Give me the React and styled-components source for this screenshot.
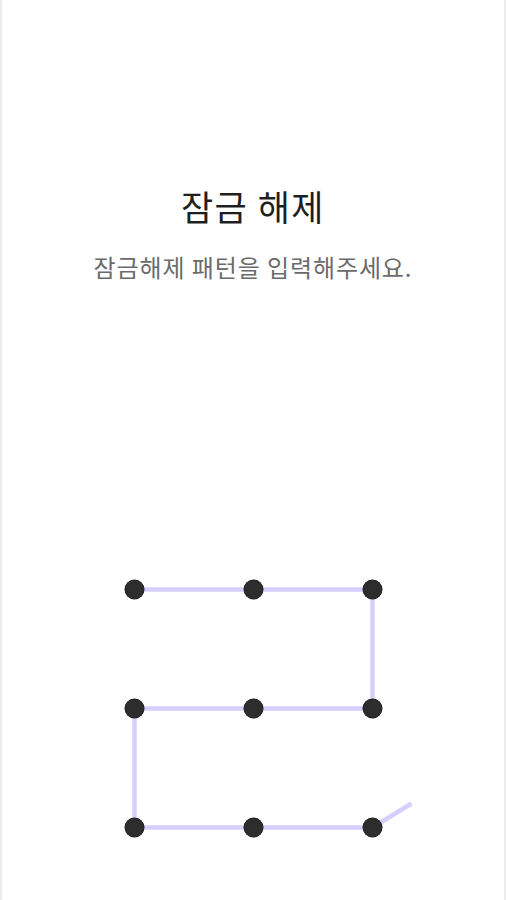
import styled, { createGlobalStyle } from "styled-components";

const GlobalStyle = createGlobalStyle`
  html, body {
    margin: 0;
    padding: 0;
    background: #ffffff;
  }
  body {
    font-family: "Noto Sans CJK KR", "Noto Sans", sans-serif;
  }
`;

const Screen = styled.div`
  box-sizing: border-box;
  width: 506px;
  height: 900px;
  display: flex;
  flex-direction: column;
  align-items: center;
  border-left: 2px solid #ececec;
  border-right: 2px solid #ececec;
  background: #fff;
  overflow: hidden;
`;

const Header = styled.div`
  display: flex;
  flex-direction: column;
  align-items: center;
  padding-top: 182px;
  gap: 22px;
`;

const Title = styled.h1`
  margin: 0;
  font-size: 35px;
  font-weight: 400;
  line-height: 48px;
  color: #1f1f1f;
  letter-spacing: 1.5px;
`;

const Subtitle = styled.p`
  margin: 0;
  font-size: 24px;
  font-weight: 400;
  line-height: 30px;
  color: #6b6b6b;
  letter-spacing: 0.9px;
`;

const PatternPad = styled.div`
  position: relative;
  margin-top: 248px;
  width: 357px;
  height: 357px;
  display: grid;
  grid-template-columns: repeat(3, 1fr);
  grid-template-rows: repeat(3, 1fr);
`;

const Trail = styled.svg`
  position: absolute;
  left: 0;
  top: 0;
  overflow: visible;
  pointer-events: none;
`;

const Cell = styled.div`
  display: grid;
  place-items: center;
  z-index: 1;
`;

const Dot = styled.span`
  width: 19px;
  height: 19px;
  border-radius: 50%;
  background: #2d2d2d;
  box-shadow: 0 0 0 0.5px #1a1a1a;
`;

const CELL = 119;
const center = (i) => i * CELL + CELL / 2;

// order of visited dots, as [col, row]
const path = [
  [0, 0], [1, 0], [2, 0],
  [2, 1], [1, 1], [0, 1],
  [0, 2], [1, 2], [2, 2],
];

function App() {
  const points = path.map(([c, r]) => `${center(c)},${center(r)}`);
  // loose end following the finger
  points.push(`${center(2) + 39},${center(2) - 24}`);

  return (
    <>
      <GlobalStyle />
      <Screen>
        <Header>
          <Title>잠금 해제</Title>
          <Subtitle>잠금해제 패턴을 입력해주세요.</Subtitle>
        </Header>

        <PatternPad>
          <Trail width="357" height="357" viewBox="0 0 357 357">
            <polyline
              points={points.join(" ")}
              fill="none"
              stroke="#d5ceff"
              strokeWidth="4.5"
              strokeLinejoin="miter"
            />
          </Trail>
          {Array.from({ length: 9 }).map((_, i) => (
            <Cell key={i}>
              <Dot />
            </Cell>
          ))}
        </PatternPad>
      </Screen>
    </>
  );
}

export default App;
